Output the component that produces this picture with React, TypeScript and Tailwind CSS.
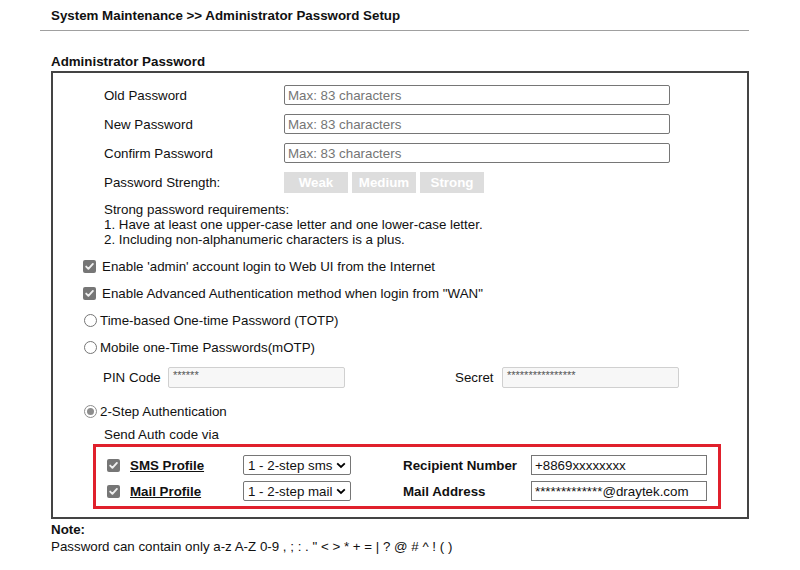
import React from "react";

function Check() {
  return (
    <span className="inline-flex w-[13px] h-[13px] shrink-0 items-center justify-center rounded-[2px] bg-[#767676]">
      <svg width="11" height="11" viewBox="0 0 11 11">
        <path d="M2.2 5.6 L4.4 7.8 L8.9 2.9" fill="none" stroke="#f0f0f0" strokeWidth="1.9" strokeLinecap="round" strokeLinejoin="round" />
      </svg>
    </span>
  );
}

function Radio({ checked = false }: { checked?: boolean }) {
  return checked ? (
    <span className="inline-flex w-[13px] h-[13px] shrink-0 items-center justify-center rounded-full border border-[#8d8d8d] bg-white">
      <span className="w-[7px] h-[7px] rounded-full bg-[#8d8d8d]" />
    </span>
  ) : (
    <span className="inline-block w-[13px] h-[13px] shrink-0 rounded-full border border-[#767676] bg-white" />
  );
}

function Select({ text }: { text: string }) {
  return (
    <div className="flex h-[20px] w-[108px] items-center justify-between rounded-[2px] border border-[#767676] bg-white pl-[4px] pr-[4px] pt-px leading-[16px]">
      <span>{text}</span>
      <svg width="10" height="7" viewBox="0 0 10 7">
        <path d="M1.2 1.3 L5 5 L8.8 1.3" fill="none" stroke="#000" strokeWidth="1.8" />
      </svg>
    </div>
  );
}

function PwRow({ label }: { label: string }) {
  return (
    <div className="flex h-[20px] items-center mb-[9px] pt-px">
      <div className="w-[180px]">{label}</div>
      <div className="-mt-px flex h-[20px] w-[386px] items-center rounded-[2px] border border-[#767676] bg-white pl-[3px] pt-px text-[#757575]">
        Max: 83 characters
      </div>
    </div>
  );
}

export default function App() {
  return (
    <div className="relative w-[800px] h-[570px] overflow-hidden bg-white text-[13.33px] text-[#111] font-['Liberation_Sans',Arial,sans-serif]">
      <div className="pl-[51px] pt-[7px] font-bold leading-[18px]">
        System Maintenance &gt;&gt; Administrator Password Setup
      </div>
      <div className="ml-[40px] mt-[5px] h-px w-[709px] bg-[#a0a0a0]" />
      <div className="ml-[51px] w-[698px]">
        <div className="mt-[22px] font-bold leading-[18px]">Administrator Password</div>
        <div className="border-2 border-[#444] pt-[12px] pb-[8px]">
          <div className="pl-[51px]">
            <PwRow label="Old Password" />
            <PwRow label="New Password" />
            <PwRow label="Confirm Password" />
            <div className="flex h-[21px] items-center">
              <div className="w-[180px]">Password Strength:</div>
              <div className="flex gap-[4px]">
                {["Weak", "Medium", "Strong"].map((t) => (
                  <div key={t} className="flex h-[21px] w-[64px] items-center justify-center bg-[#dddddd] font-bold text-white">
                    {t}
                  </div>
                ))}
              </div>
            </div>
            <div className="mt-[9px] leading-[15px]">
              <div>Strong password requirements:</div>
              <div>1. Have at least one upper-case letter and one lower-case letter.</div>
              <div>2. Including non-alphanumeric characters is a plus.</div>
            </div>
          </div>
          <div className="mt-[6px] pl-[30px]">
            <div className="flex h-[27px] items-center gap-[6px]">
              <Check />
              <span>Enable 'admin' account login to Web UI from the Internet</span>
            </div>
            <div className="flex h-[27px] items-center gap-[6px]">
              <Check />
              <span>Enable Advanced Authentication method when login from "WAN"</span>
            </div>
            <div className="flex h-[27px] items-center gap-[3px] pl-px">
              <Radio />
              <span>Time-based One-time Password (TOTP)</span>
            </div>
            <div className="flex h-[27px] items-center gap-[3px] pl-px">
              <Radio />
              <span>Mobile one-Time Passwords(mOTP)</span>
            </div>
          </div>
          <div className="mt-[6px] flex h-[21px] items-center pl-[50px]">
            <div className="w-[65px]">PIN Code</div>
            <div className="h-[21px] w-[177px] rounded-[2px] border border-[#d0d0d0] bg-[#f7f7f7] pl-[4px] text-[11px] leading-[15px] text-[#555]">
              ******
            </div>
            <div className="ml-[110px] w-[47px]">Secret</div>
            <div className="h-[21px] w-[177px] rounded-[2px] border border-[#d0d0d0] bg-[#f7f7f7] pl-[4px] text-[11px] leading-[15px] text-[#555]">
              ****************
            </div>
          </div>
          <div className="mt-[10px] flex h-[27px] items-center gap-[3px] pl-[31px]">
            <Radio checked />
            <span>2-Step Authentication</span>
          </div>
          <div className="mt-[2px] h-[16px] pl-[51px] leading-[16px]">Send Auth code via</div>
          <div className="ml-[40px] mt-[1px] w-[628px] border-[3px] border-[#e0202c] pl-[11px] pt-[8px] pb-[5px]">
            <div className="flex h-[20px] items-center">
              <div className="flex w-[136px] items-center gap-[10px] pt-px">
                <Check />
                <span className="font-bold underline">SMS Profile</span>
              </div>
              <Select text="1 - 2-step sms" />
              <div className="ml-[52px] w-[128px] pt-px font-bold">Recipient Number</div>
              <div className="flex h-[20px] w-[176px] items-center border border-[#767676] bg-white pl-[3px] pt-px">
                +8869xxxxxxxx
              </div>
            </div>
            <div className="mt-[6px] flex h-[20px] items-center">
              <div className="flex w-[136px] items-center gap-[10px] pt-px">
                <Check />
                <span className="font-bold underline">Mail Profile</span>
              </div>
              <Select text="1 - 2-step mail" />
              <div className="ml-[52px] w-[128px] pt-px font-bold">Mail Address</div>
              <div className="flex h-[20px] w-[176px] items-center border border-[#767676] bg-white pl-[3px] pt-px">
                *************@draytek.com
              </div>
            </div>
          </div>
        </div>
        <div className="mt-[2px] font-bold leading-[18px]">Note:</div>
        <div className="leading-[16px]">
          Password can contain only a-z A-Z 0-9 , ; : . " &lt; &gt; * + = | ? @ # ^ ! ( )
        </div>
      </div>
    </div>
  );
}
